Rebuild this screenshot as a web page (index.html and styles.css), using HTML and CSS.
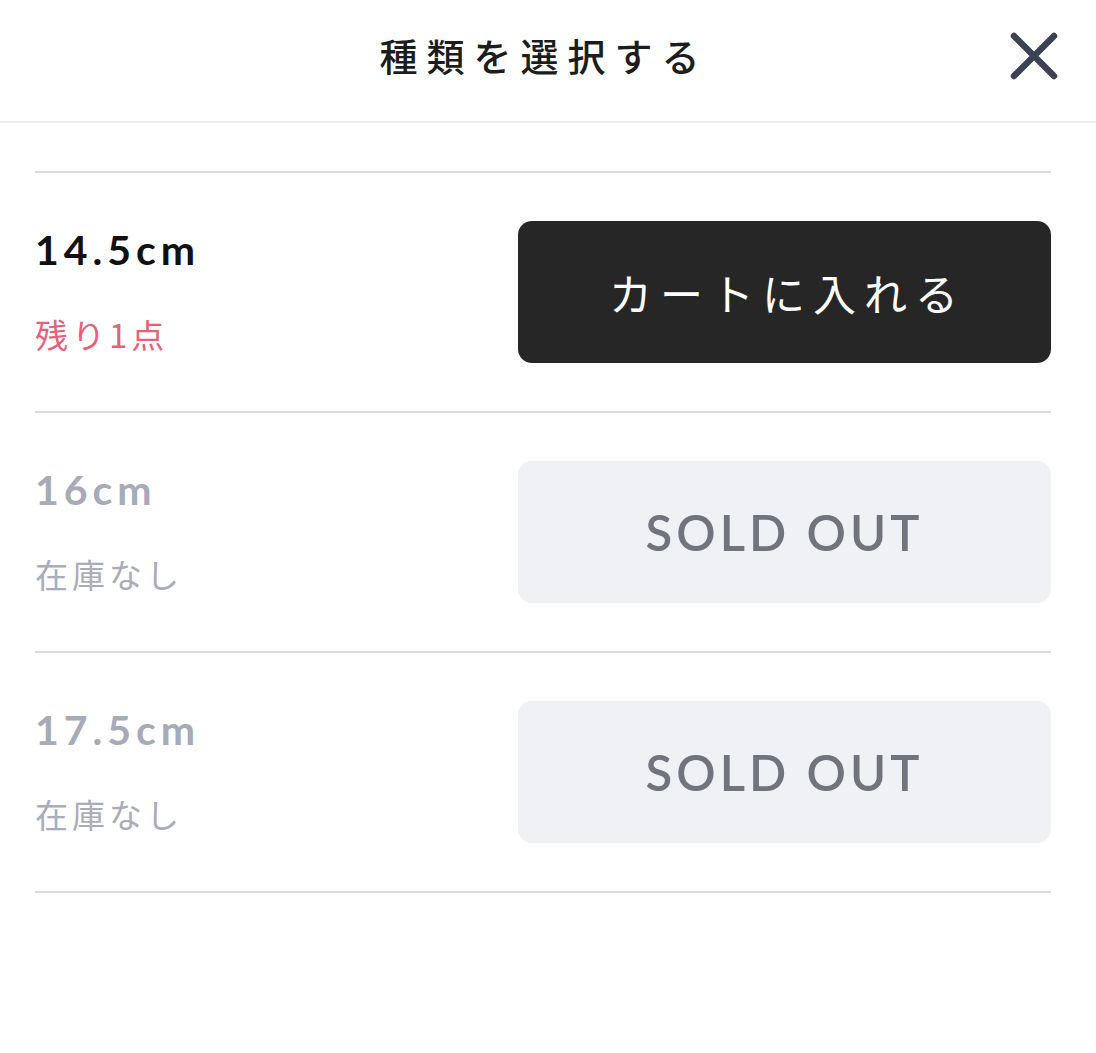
FILE: index.html
```html
<!DOCTYPE html>
<html lang="ja">
<head>
    <meta charset="UTF-8">
    <meta name="viewport" content="width=device-width, initial-scale=1.0">
    <title>種類を選択する</title>
    <link rel="stylesheet" href="styles.css">
</head>
<body>

    <!-- Header -->
    <div class="header">
        <div class="header-title">種類を選択する</div>
        <button class="close-btn" aria-label="閉じる">
            <svg width="48" height="48" viewBox="0 0 48 48">
                <path d="M4 4 L44 44 M44 4 L4 44" stroke="#3b4254" stroke-width="6.5" stroke-linecap="round" fill="none"/>
            </svg>
        </button>
    </div>

    <!-- Variant list -->
    <div class="variant-list">
        <div class="variant-row">
            <div class="variant-info">
                <div class="variant-size">14.5cm</div>
                <div class="variant-stock stock-low">残り1点</div>
            </div>
            <button class="cart-btn">カートに入れる</button>
        </div>
        <div class="variant-row">
            <div class="variant-info">
                <div class="variant-size size-out">16cm</div>
                <div class="variant-stock stock-out">在庫なし</div>
            </div>
            <button class="cart-btn sold-out" disabled>SOLD OUT</button>
        </div>
        <div class="variant-row">
            <div class="variant-info">
                <div class="variant-size size-out">17.5cm</div>
                <div class="variant-stock stock-out">在庫なし</div>
            </div>
            <button class="cart-btn sold-out" disabled>SOLD OUT</button>
        </div>
    </div>

</body>
</html>
```

FILE: styles.css
```css
body {
    margin: 0;
    background: #ffffff;
    font-family: Lato, "Noto Sans CJK JP", sans-serif;
    color: #1c1c1c;
}
.header {
    height: 121px;
    border-bottom: 2px solid #f0f0f0;
    display: flex;
    align-items: center;
    justify-content: center;
    position: relative;
}
.header-title {
    font-family: "Noto Sans CJK JP", sans-serif;
    font-size: 38px;
    font-weight: 500;
    letter-spacing: 9px;
    color: #1c1c1c;
    margin: 0 8px 12px 0;
}
.close-btn {
    position: absolute;
    right: 38px;
    top: 32px;
    width: 48px;
    height: 48px;
    padding: 0;
    border: none;
    background: none;
}
.close-btn svg {
    display: block;
}
.variant-list {
    margin: 48px 45px 0 35px;
    border-top: 2px solid #dcdcdc;
}
.variant-row {
    display: flex;
    align-items: center;
    justify-content: space-between;
    padding: 48px 0;
    border-bottom: 2px solid #dcdcdc;
}
.variant-info {
    display: flex;
    flex-direction: column;
    gap: 36px;
}
.variant-size {
    font-family: Lato, sans-serif;
    font-size: 41px;
    font-weight: 700;
    line-height: 48px;
    letter-spacing: 5px;
    color: #111111;
}
.size-out {
    color: #a7abb8;
}
.variant-stock {
    font-family: "Noto Sans CJK JP", sans-serif;
    font-size: 33px;
    line-height: 48px;
    letter-spacing: 4px;
}
.stock-low {
    color: #e95f77;
}
.stock-out {
    color: #a9adb9;
}
.cart-btn {
    width: 533px;
    height: 142px;
    border: none;
    border-radius: 14px;
    background: #262626;
    color: #ffffff;
    font-family: "Noto Sans CJK JP", sans-serif;
    font-size: 43px;
    letter-spacing: 8px;
    padding: 0 0 0 6px;
}
.sold-out {
    background: #f0f1f5;
    color: #71747c;
    font-family: Lato, sans-serif;
    font-size: 49px;
    font-weight: 600;
    letter-spacing: 4px;
    padding: 0;
}
```
